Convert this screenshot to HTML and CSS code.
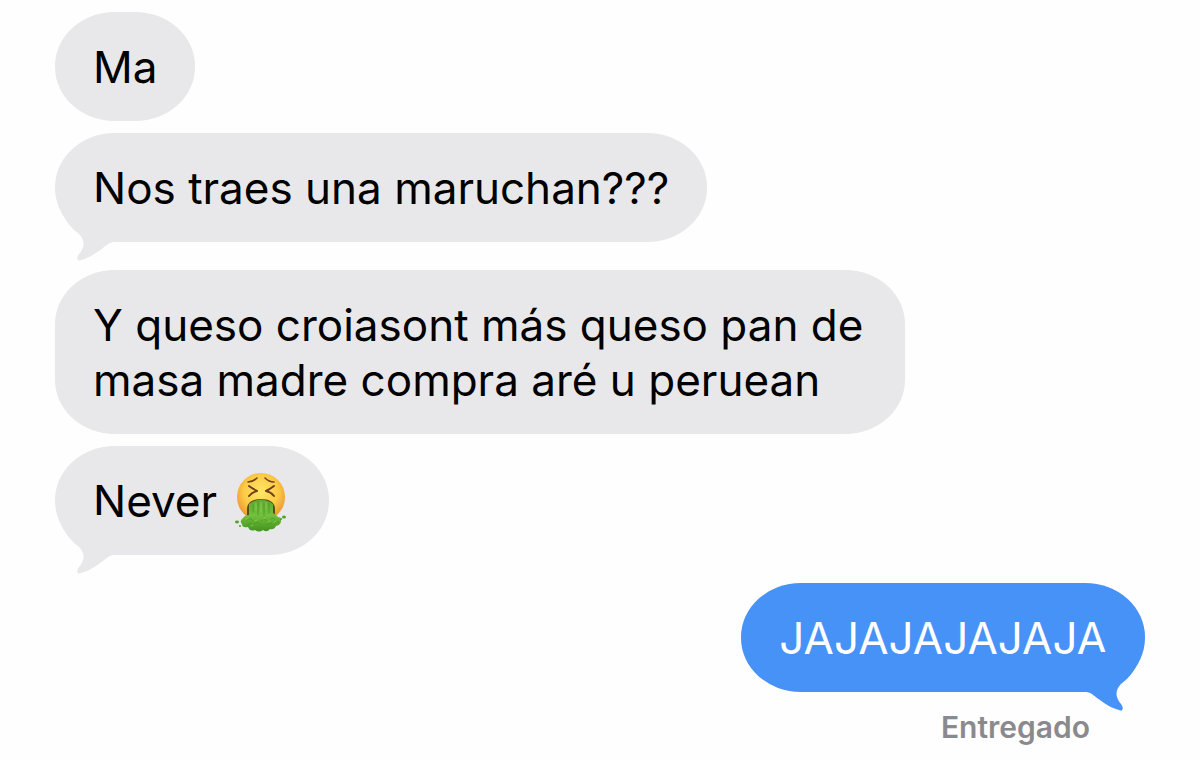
FILE: index.html
```html
<!DOCTYPE html>
<html lang="es">
<head>
    <meta charset="UTF-8">
    <meta name="viewport" content="width=device-width, initial-scale=1.0">
    <title>Mensajes</title>
    <link rel="stylesheet" href="styles.css">
</head>
<body>
    <main class="chat">
        <div class="bubble received">Ma</div>
        <div class="bubble received last">
            Nos traes una maruchan???
            <svg class="tail" viewBox="0 0 60 60" aria-hidden="true"><path d="M3 0C7 16 16 26 24 32C30 38 30 45 24 52C21 56 22 60 26 58C34 56 41 51 48 46C53 42 55 40 60 40V0Z"/></svg>
        </div>
        <div class="bubble received">Y queso croiasont más queso pan de masa madre compra aré u peruean</div>
        <div class="bubble received last">
            <span>Never</span>
            <svg class="emoji" viewBox="0 0 60 55" role="img" aria-label="Cara vomitando">
                <defs>
                    <radialGradient id="face" cx="50%" cy="40%" r="60%">
                        <stop offset="0" stop-color="#ffe668"/>
                        <stop offset="0.6" stop-color="#fccb45"/>
                        <stop offset="1" stop-color="#eb9130"/>
                    </radialGradient>
                    <linearGradient id="vomit" x1="0" y1="0" x2="0" y2="1">
                        <stop offset="0" stop-color="#5fa832"/>
                        <stop offset="0.5" stop-color="#72c03c"/>
                        <stop offset="1" stop-color="#43921f"/>
                    </linearGradient>
                </defs>
                <circle cx="30" cy="23" r="24" fill="url(#face)"/>
                <g fill="none" stroke="#70401a" stroke-linecap="round" stroke-linejoin="round">
                    <path stroke-width="1.6" d="M17 8Q22 8 26 4M43 8Q38 8 34 4"/>
                    <path stroke-width="2" d="M18 12Q22 15 26 17Q21 18 18 22M43 12Q39 15 35 17Q40 18 43 22"/>
                </g>
                <path fill="#5b4a1a" d="M16 42V35C16 28 22 25 30 25S44 28 44 35V42Z"/>
                <path fill="url(#vomit)" d="M18 30Q30 21 42 30L42 39Q46 41 47 43Q51 43 50 47Q50 51 45 52Q43 56 39 55Q36 59 32 56Q28 59 24 56Q19 58 17 53Q11 54 11 50Q8 47 12 44Q14 41 18 41Z"/>
                <g fill="none" stroke="#4a9a28" stroke-width="0.8" stroke-linecap="round">
                    <path d="M22 31V38M27 28V41M33 30V42M38 29V39"/>
                    <path d="M16 46Q20 43 22 47M23 50Q26 46 29 50M30 47Q33 43 36 47M35 51Q38 47 41 50M40 45Q43 43 44 46M17 50Q19 48 21 50M44 49Q46 46 48 48M27 54Q29 52 31 54"/>
                </g>
                <g fill="none" stroke="#92d455" stroke-width="0.8" stroke-linecap="round">
                    <path d="M25 29V36M30 28V38M35 28V35M15 45L17 44M24 47L26 46M32 45L34 44M37 48L39 47M20 52L22 51M43 48L45 47"/>
                </g>
                <g fill="#51a32b">
                    <ellipse cx="6" cy="48" rx="2" ry="1.4"/>
                    <ellipse cx="53" cy="43" rx="2" ry="1.5"/>
                    <circle cx="50" cy="45" r="1"/>
                    <circle cx="9" cy="52" r="1"/>
                </g>
            </svg>
            <svg class="tail" viewBox="0 0 60 60" aria-hidden="true"><path d="M3 0C7 16 16 26 24 32C30 38 30 45 24 52C21 56 22 60 26 58C34 56 41 51 48 46C53 42 55 40 60 40V0Z"/></svg>
        </div>
        <div class="bubble sent last">
            JAJAJAJAJAJA
            <svg class="tail" viewBox="0 0 60 60" aria-hidden="true"><path d="M3 0C7 16 16 26 24 32C30 38 30 45 24 52C21 56 22 60 26 58C34 56 41 51 48 46C53 42 55 40 60 40V0Z"/></svg>
        </div>
        <p class="status">Entregado</p>
    </main>
</body>
</html>
```
FILE: styles.css
```css
body { font-family: Inter, "Liberation Sans", sans-serif; background-color: #fefefe; color: #000; margin: 0; }
.chat { display: flex; flex-direction: column; align-items: flex-start; padding: 12px 55px 0; }
.bubble { position: relative; box-sizing: border-box; max-width: 78%; margin-bottom: 12px; padding: 28px 38px 26px; border-radius: 60px / 54px; font-size: 44px; line-height: 55px; }
.received { background: #e8e8ea; }
.sent { align-self: flex-end; background: #4792f7; color: #fff; }
.last { display: flex; align-items: center; gap: 14px; margin-bottom: 28px; }
.tail { position: absolute; left: 0; bottom: -20px; width: 60px; height: 60px; fill: #e8e8ea; }
.sent .tail { left: auto; right: 0; transform: scaleX(-1); fill: #4792f7; }
.emoji { width: 60px; height: 55px; overflow: visible; }
.sent.last { margin-bottom: 16px; }
.status { align-self: flex-end; margin: 0 55px 0 0; font-size: 30px; font-weight: 600; line-height: 38px; color: #8a8a8e; }
```
